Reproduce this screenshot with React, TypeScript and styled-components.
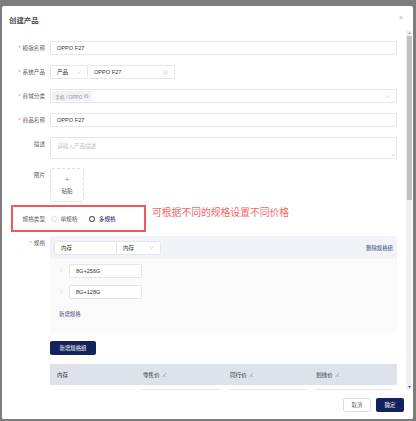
import React from 'react';
import styled, { createGlobalStyle } from 'styled-components';

const NAVY = '#13235e';
const LINE = '#e3e6ec';

const Global = createGlobalStyle`
  html, body { margin: 0; padding: 0; }
  body {
    background: #7d7d7d;
    font-family: "Liberation Sans", "Noto Sans CJK SC", sans-serif;
    -webkit-font-smoothing: antialiased;
  }
  #root { width: 416px; height: 421px; overflow: hidden; }
`;

const Backdrop = styled.div`
  width: 416px;
  height: 421px;
  box-sizing: border-box;
  padding: 6px 3px 2px 2px;
  background: #7d7d7d;
  display: flex;
`;

const Modal = styled.div`
  flex: 1;
  background: #fff;
  border-radius: 2px;
  display: flex;
  flex-direction: column;
  overflow: hidden;
`;

const Header = styled.div`
  height: 24px;
  flex: none;
  display: flex;
  align-items: center;
  padding: 0 10px 0 7px;
`;

const Title = styled.div`
  font-size: 7.4px;
  color: #303133;
  font-weight: 500;
  margin-top: 3px;
`;

const Close = styled.span`
  margin-left: auto;
  margin-top: -2px;
  font-size: 7px;
  color: #b6b9c0;
  line-height: 1;
`;

const Body = styled.div`
  flex: 1;
  min-height: 0;
  display: flex;
`;

const Content = styled.div`
  flex: 1;
  overflow: hidden;
  padding: 11px 9px 0 0;
`;

const Row = styled.div<{ $gap?: number }>`
  display: grid;
  grid-template-columns: 43px 1fr;
  column-gap: 5px;
  margin-bottom: ${p => (p.$gap ?? 10)}px;
  position: relative;
`;

const Label = styled.div`
  text-align: right;
  font-size: 5.6px;
  line-height: 14px;
  color: #606266;
  white-space: nowrap;
`;

const Star = styled.span`
  color: #f56c6c;
  margin-right: 2px;
`;

const Field = styled.div<{ $w?: number }>`
  box-sizing: border-box;
  height: 14px;
  ${p => (p.$w ? `width: ${p.$w}px;` : '')}
  border: 1px solid ${LINE};
  border-radius: 1.5px;
  background: #fff;
  display: flex;
  align-items: center;
  padding: 0 6px;
  font-size: 5.6px;
  color: #333;
  white-space: nowrap;
  flex: none;
`;

const Controls = styled.div`
  display: flex;
`;

const Caret = styled.svg`
  margin-left: auto;
  width: 5px;
  height: 3px;
`;

const ClearIcon = styled.svg`
  margin-left: auto;
  width: 5px;
  height: 5px;
`;

const Tag = styled.span`
  display: inline-flex;
  align-items: center;
  gap: 2px;
  height: 10px;
  padding: 0 3px;
  margin-left: -5px;
  background: #f0f2f5;
  border-radius: 1.5px;
  font-size: 4.8px;
  color: #909399;
`;

const TextArea = styled(Field)`
  height: 22px;
  align-items: flex-start;
  padding-top: 4px;
  color: #c0c4cc;
  position: relative;
`;

const Grip = styled.svg`
  position: absolute;
  right: 1px;
  bottom: 1px;
  width: 4px;
  height: 4px;
`;

const Upload = styled.div`
  box-sizing: border-box;
  width: 34px;
  height: 34px;
  border: 1px dashed #d9dce3;
  border-radius: 2px;
  display: flex;
  flex-direction: column;
  align-items: center;
  justify-content: center;
  gap: 3px;
  color: #606266;
  font-size: 5.6px;
`;

const Plus = styled.span`
  font-size: 8px;
  line-height: 8px;
  color: #8e9096;
  font-weight: 300;
`;

const RadioGroup = styled.div`
  display: flex;
  align-items: center;
  height: 14px;
  padding-left: 1px;
`;

const RadioItem = styled.label<{ $on?: boolean }>`
  display: flex;
  align-items: center;
  gap: 4px;
  margin-right: 12px;
  font-size: 5.6px;
  color: ${p => (p.$on ? NAVY : '#606266')};
`;

const RadioDot = styled.span<{ $on?: boolean }>`
  box-sizing: border-box;
  width: 5.5px;
  height: 5.5px;
  border-radius: 50%;
  border: ${p => (p.$on ? `1.6px solid ${NAVY}` : '0.8px solid #dcdfe6')};
  background: #fff;
`;

/* red annotation frame drawn over the spec-type row */
const Highlight = styled.div`
  position: absolute;
  left: 9px;
  top: -7px;
  width: 135px;
  height: 27px;
  box-sizing: border-box;
  border: 2px solid #ec5b5b;
  pointer-events: none;
`;

const Note = styled.div`
  position: absolute;
  left: 150px;
  top: -6px;
  font-size: 9.8px;
  line-height: 14px;
  color: #f26666;
  white-space: nowrap;
`;

const SpecPanel = styled.div`
  background: #fafafa;
  padding-bottom: 12px;
`;

const SpecHead = styled.div`
  height: 23px;
  box-sizing: border-box;
  background: #f1f3f8;
  display: flex;
  align-items: center;
  padding: 0 4px;
`;

const LinkText = styled.span`
  font-size: 5.4px;
  color: #3b4a7c;
`;

const HeadLink = styled(LinkText)`
  margin-left: auto;
`;

const SpecValues = styled.div`
  padding: 5px 0 0 10px;
  display: flex;
  flex-direction: column;
  gap: 7px;
`;

const ValueRow = styled.div`
  display: flex;
  align-items: center;
  gap: 6px;
`;

const Handle = styled.span`
  font-size: 4px;
  color: #c8cad0;
  width: 3px;
  line-height: 1;
`;

const AddValue = styled(LinkText)`
  display: block;
  padding: 8px 0 0 9px;
  line-height: 14px;
`;

const PrimaryBtn = styled.button<{ $w: number }>`
  box-sizing: border-box;
  width: ${p => p.$w}px;
  height: 14px;
  border: none;
  border-radius: 2px;
  background: ${NAVY};
  color: #fff;
  font-family: inherit;
  font-size: 5.4px;
  padding: 0;
  display: flex;
  align-items: center;
  justify-content: center;
`;

const PlainBtn = styled(PrimaryBtn)`
  background: #fff;
  color: #606266;
  border: 1px solid #dcdfe6;
`;

const Table = styled.div`
  display: grid;
  grid-template-columns: 86px 87px 86px 1fr;
`;

const Th = styled.div`
  height: 21px;
  background: #dee2eb;
  display: flex;
  align-items: center;
  gap: 2px;
  padding-left: 7px;
  font-size: 5.6px;
  color: #333;
`;

const Td = styled.div<{ $text?: boolean }>`
  height: 24px;
  box-sizing: border-box;
  padding: ${p => (p.$text ? '7px 0 0 7px' : '4px 3px 0 5px')};
  font-size: 5.6px;
  color: #606266;
`;

const CellInput = styled(Field)`
  width: 80px;
  height: 14px;
  color: #909399;
`;

const Footer = styled.div`
  height: 28px;
  flex: none;
  display: flex;
  justify-content: flex-end;
  align-items: center;
  gap: 5px;
  padding: 1px 9px 0 0;
  background: #fff;
`;

const ScrollTrack = styled.div`
  width: 6px;
  flex: none;
  margin-right: 1px;
  background: #f1f1f1;
  display: flex;
  flex-direction: column;
  align-items: center;
`;

const ScrollArrow = styled.svg`
  width: 3px;
  height: 2px;
  flex: none;
  margin: 2px 0;
`;

const Thumb = styled.div`
  width: 5px;
  height: 164px;
  background: #c1c1c1;
  flex: none;
`;

const Fill = styled.div`
  flex: 1;
`;

const PenIcon = () => (
  <svg width="5" height="5" viewBox="0 0 10 10" fill="none" stroke="#8a8f99" strokeWidth="0.9">
    <path d="M2 8 L7 3 L8 4 L3 9 L1.8 9.2 Z" />
    <path d="M5 9.4 H9" />
  </svg>
);

const Chevron = () => (
  <Caret viewBox="0 0 10 6" fill="none" stroke="#b4b8c0" strokeWidth="1">
    <path d="M1 1 L5 5 L9 1" />
  </Caret>
);

export default function App() {
  return (
    <>
      <Global />
      <Backdrop>
        <Modal>
          <Header>
            <Title>创建产品</Title>
            <Close>×</Close>
          </Header>
          <Body>
            <Content>
              <Row>
                <Label><Star>*</Star>模版名称</Label>
                <Field>OPPO F27</Field>
              </Row>
              <Row>
                <Label><Star>*</Star>系统产品</Label>
                <Controls>
                  <Field $w={38}>产品<Chevron /></Field>
                  <Field $w={88} style={{ marginLeft: -1 }}>
                    OPPO F27
                    <ClearIcon viewBox="0 0 10 10" fill="none" stroke="#c0c4cc" strokeWidth="0.9">
                      <circle cx="5" cy="5" r="4.2" />
                      <path d="M3.4 3.4 L6.6 6.6 M6.6 3.4 L3.4 6.6" />
                    </ClearIcon>
                  </Field>
                </Controls>
              </Row>
              <Row>
                <Label><Star>*</Star>商城分类</Label>
                <Field>
                  <Tag>
                    手机 / OPPO
                    <svg width="4.5" height="4.5" viewBox="0 0 10 10">
                      <circle cx="5" cy="5" r="5" fill="#c0c4cc" />
                      <path d="M3.3 3.3 L6.7 6.7 M6.7 3.3 L3.3 6.7" stroke="#fff" strokeWidth="1.2" />
                    </svg>
                  </Tag>
                  <Chevron />
                </Field>
              </Row>
              <Row>
                <Label><Star>*</Star>商品名称</Label>
                <Field>OPPO F27</Field>
              </Row>
              <Row $gap={9}>
                <Label>描述</Label>
                <TextArea>
                  请输入产品描述
                  <Grip viewBox="0 0 8 8" stroke="#a0a4ac" strokeWidth="0.8">
                    <path d="M7 1 L1 7 M7 4 L4 7" />
                  </Grip>
                </TextArea>
              </Row>
              <Row $gap={10}>
                <Label>图片</Label>
                <Upload>
                  <Plus>+</Plus>
                  粘贴
                </Upload>
              </Row>
              <Row>
                <Label>规格类型</Label>
                <RadioGroup>
                  <RadioItem><RadioDot />单规格</RadioItem>
                  <RadioItem $on><RadioDot $on />多规格</RadioItem>
                </RadioGroup>
                <Highlight />
                <Note>可根据不同的规格设置不同价格</Note>
              </Row>
              <Row $gap={8}>
                <Label><Star>*</Star>规格</Label>
                <SpecPanel>
                  <SpecHead>
                    <Field $w={63}>内存</Field>
                    <Field $w={45} style={{ marginLeft: -1 }}>内存<Chevron /></Field>
                    <HeadLink>删除规格组</HeadLink>
                  </SpecHead>
                  <SpecValues>
                    <ValueRow>
                      <Handle>⠿</Handle>
                      <Field $w={73}>8G+256G</Field>
                    </ValueRow>
                    <ValueRow>
                      <Handle>⠿</Handle>
                      <Field $w={73}>8G+128G</Field>
                    </ValueRow>
                  </SpecValues>
                  <AddValue>新增规格</AddValue>
                </SpecPanel>
              </Row>
              <Row $gap={9}>
                <Label />
                <div><PrimaryBtn $w={46}>新增规格组</PrimaryBtn></div>
              </Row>
              <Row>
                <Label />
                <Table>
                  <Th>内存</Th>
                  <Th>零售价<PenIcon /></Th>
                  <Th>同行价<PenIcon /></Th>
                  <Th>划线价<PenIcon /></Th>
                  <Td $text>8G+256G</Td>
                  <Td><CellInput>2999</CellInput></Td>
                  <Td><CellInput>2899</CellInput></Td>
                  <Td><CellInput /></Td>
                </Table>
              </Row>
            </Content>
            <ScrollTrack>
              <ScrollArrow viewBox="0 0 6 4"><path d="M0 4 L3 0 L6 4 Z" fill="#a3a3a3" /></ScrollArrow>
              <Thumb />
              <Fill />
              <ScrollArrow viewBox="0 0 6 4"><path d="M0 0 L3 4 L6 0 Z" fill="#505050" /></ScrollArrow>
            </ScrollTrack>
          </Body>
          <Footer>
            <PlainBtn $w={28}>取消</PlainBtn>
            <PrimaryBtn $w={28}>确定</PrimaryBtn>
          </Footer>
        </Modal>
      </Backdrop>
    </>
  );
}
